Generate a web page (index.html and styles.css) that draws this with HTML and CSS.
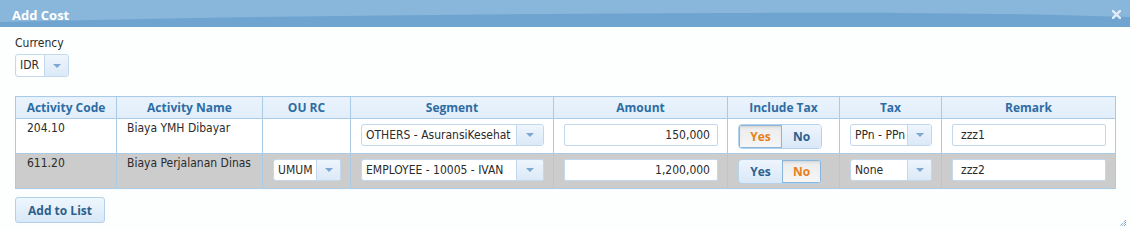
FILE: index.html
```html
<!DOCTYPE html>
<html>
<head>
<meta charset="utf-8">
<link rel="stylesheet" href="styles.css">
</head>
<body>
<div class="window">
  <div class="titlebar">
    <svg class="wave" width="1130" height="27" viewBox="0 0 1130 27" preserveAspectRatio="none"><path d="M0 0H1130V17C1000 13 880 12 720 13C480 14 240 16 0 22Z" fill="#89b6db"/></svg>
    <span class="title">Add Cost</span>
    <svg class="close" width="9" height="9" viewBox="0 0 9 9"><path d="M1 1L8 8M8 1L1 8" stroke="#e3edf6" stroke-width="2.4" stroke-linecap="square"/></svg>
  </div>
  <div class="content">
    <div class="label">Currency</div>
    <div class="dd dd-cur"><span class="dd-val">IDR</span><span class="dd-arrow"><i></i></span></div>
    <table class="grid">
      <colgroup>
        <col class="c1"><col class="c2"><col class="c3"><col class="c4"><col class="c5"><col class="c6"><col class="c7"><col class="c8">
      </colgroup>
      <thead>
        <tr>
          <th>Activity Code</th><th>Activity Name</th><th>OU RC</th><th>Segment</th><th>Amount</th><th>Include Tax</th><th>Tax</th><th>Remark</th>
        </tr>
      </thead>
      <tbody>
        <tr>
          <td class="txt code">204.10</td>
          <td class="txt">Biaya YMH Dibayar</td>
          <td></td>
          <td><div class="dd dd-seg"><span class="dd-val">OTHERS - AsuransiKesehat</span><span class="dd-arrow"><i></i></span></div></td>
          <td><div class="inp num">150,000</div></td>
          <td><div class="toggle"><span class="opt yes on">Yes</span><span class="opt no">No</span></div></td>
          <td><div class="dd"><span class="dd-val">PPn - PPn</span><span class="dd-arrow"><i></i></span></div></td>
          <td><div class="inp">zzz1</div></td>
        </tr>
        <tr class="alt">
          <td class="txt code">611.20</td>
          <td class="txt">Biaya Perjalanan Dinas</td>
          <td><div class="dd"><span class="dd-val">UMUM</span><span class="dd-arrow"><i></i></span></div></td>
          <td><div class="dd dd-seg"><span class="dd-val">EMPLOYEE - 10005 - IVAN</span><span class="dd-arrow"><i></i></span></div></td>
          <td><div class="inp num">1,200,000</div></td>
          <td><div class="toggle"><span class="opt yes">Yes</span><span class="opt no on">No</span></div></td>
          <td><div class="dd"><span class="dd-val">None</span><span class="dd-arrow"><i></i></span></div></td>
          <td><div class="inp">zzz2</div></td>
        </tr>
      </tbody>
    </table>
    <button class="btn">Add to List</button>
  </div>
  <svg class="grip" width="8" height="8" viewBox="0 0 8 8"><path d="M7 1L1 7M7 3L3 7M7 5L5 7" stroke="#3d7fc6" stroke-width="1" stroke-dasharray="1 1"/></svg>
</div>
</body>
</html>
```
FILE: styles.css
```css
html, body {
  margin: 0;
  padding: 0;
  background: #ffffff;
}
.window {
  position: relative;
  width: 1130px;
  height: 230px;
  overflow: hidden;
  background: #fdfefe;
  font-family: "DejaVu Sans Condensed", "DejaVu Sans", sans-serif;
  font-stretch: condensed;
  font-size: 12px;
  color: #2b2b2b;
}
.titlebar {
  position: relative;
  height: 27px;
  background: #6ea4cf;
  display: flex;
  align-items: center;
  justify-content: space-between;
  padding: 0 9px 0 12px;
  border-top-right-radius: 3px;
}
.wave {
  position: absolute;
  left: 0;
  top: 0;
}
.title {
  position: relative;
  font-family: "Open Sans", sans-serif;
  font-stretch: normal;
  font-weight: bold;
  font-size: 13px;
  color: #ffffff;
  padding-top: 2px;
}
.close {
  position: relative;
  margin-top: 1px;
}
.content {
  padding: 9px 15px 0 15px;
}
.label {
  line-height: 15px;
  margin-bottom: 3px;
}
.dd {
  display: flex;
  box-sizing: border-box;
  height: 22px;
  border: 1px solid #c3d8ec;
  border-radius: 3px;
  background: #ffffff;
  overflow: hidden;
}
.dd-cur {
  width: 54px;
  height: 23px;
}
.dd-val {
  flex: 1;
  min-width: 0;
  padding: 0 4px;
  line-height: 20px;
  white-space: nowrap;
  overflow: hidden;
}
.dd-cur .dd-val {
  line-height: 21px;
}
.dd-arrow {
  width: 23px;
  flex: none;
  border-left: 1px solid #c3d8ec;
  background: linear-gradient(#eef5fd, #dbe9f7);
  display: flex;
  align-items: center;
  justify-content: center;
}
.dd-arrow i {
  width: 0;
  height: 0;
  border-left: 4px solid transparent;
  border-right: 4px solid transparent;
  border-top: 4px solid #7ba7d1;
}
.dd-seg .dd-arrow {
  width: 26px;
  border-radius: 0 3px 3px 0;
}
.grid {
  margin-top: 19px;
  border-collapse: collapse;
  table-layout: fixed;
  width: 1100px;
  border: 1px solid #a9cbe6;
}
.c1 { width: 101px; }
.c2 { width: 146px; }
.c3 { width: 88px; }
.c4 { width: 203px; }
.c5 { width: 174px; }
.c6 { width: 112px; }
.c7 { width: 102px; }
.c8 { width: 174px; }
.grid th {
  height: 21px;
  padding: 0;
  border: 1px solid #a9cbe6;
  background: linear-gradient(#eaf3fc, #e1eefa);
  font-family: "Open Sans", sans-serif;
  font-stretch: normal;
  font-weight: bold;
  font-size: 12px;
  color: #2e6ca4;
  text-align: center;
  line-height: 20px;
}
.grid td {
  height: 29px;
  padding: 5px 9px 0 10px;
  border: 1px solid #a9cbe6;
  vertical-align: top;
  background: #ffffff;
}
.grid tr.alt td {
  background: #cccccc;
}
.grid td.txt {
  padding-top: 2px;
  line-height: 15px;
  white-space: nowrap;
}
.grid td.code {
  padding-left: 11px;
}
.inp {
  box-sizing: border-box;
  height: 22px;
  border: 1px solid #c3d8ec;
  border-radius: 2px;
  background: #ffffff;
  padding: 0 7px 0 8px;
  line-height: 20px;
  white-space: nowrap;
  overflow: hidden;
}
.inp.num {
  text-align: right;
}
.toggle {
  display: flex;
  box-sizing: border-box;
  width: 84px;
  height: 25px;
  border: 1px solid #b5d2ec;
  border-radius: 4px;
  overflow: hidden;
  font-family: "Open Sans", sans-serif;
  font-stretch: normal;
  font-weight: bold;
  font-size: 12px;
}
.opt {
  display: flex;
  align-items: center;
  justify-content: center;
  background: linear-gradient(#eef5fd, #d9e8f7);
  color: #2d5f8d;
}
.opt.yes {
  width: 43px;
}
.opt.no {
  flex: 1;
}
.opt.on {
  background: linear-gradient(#ececec, #f6f6f6);
  color: #e6801e;
  box-shadow: inset 0 0 0 1px #8ab5dd, inset 0 2px 3px rgba(0,0,0,0.12);
}
.btn {
  display: block;
  margin-top: 8px;
  width: 90px;
  height: 26px;
  padding: 0;
  border: 1px solid #b3d0eb;
  border-radius: 3px;
  background: linear-gradient(#eef6fd, #d8e8f7);
  font-family: "Open Sans", sans-serif;
  font-stretch: normal;
  font-weight: bold;
  font-size: 12px;
  color: #2e5f8c;
}
.grip {
  position: absolute;
  right: 3px;
  bottom: 3px;
}
```
